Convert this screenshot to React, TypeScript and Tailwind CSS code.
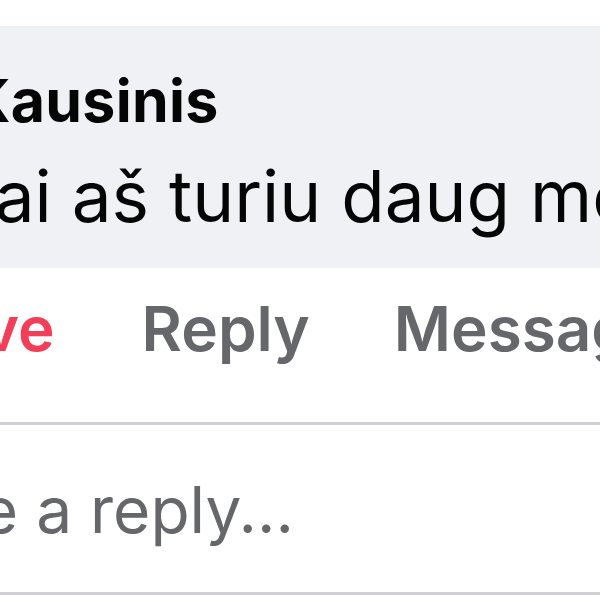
export default function App() {
  const font = { fontFamily: 'Inter, "Noto Sans", sans-serif' };
  return (
    <div className="w-[600px] h-[600px] overflow-hidden bg-white" style={font}>
      <div className="mt-[26px] h-[242px] w-[700px] bg-[#f0f1f5] pt-[40px] overflow-hidden">
        <div className="ml-[-32px] h-[70px] whitespace-nowrap text-[59px] font-bold leading-[70px] tracking-[0.3px] text-[#050505]">
          Kausinis
        </div>
        <div className="ml-[-53px] mt-[10px] h-[100px] whitespace-nowrap text-[71px] leading-[100px] text-[#050505]">
          Kai aš turiu daug metų
        </div>
      </div>
      <div className="mt-[21px] flex h-[80px] items-center whitespace-nowrap text-[62px] font-semibold leading-[80px] text-[#65676b]">
        <span className="ml-[-89px] text-[#f33e58]">Love</span>
        <span className="ml-[87px]">Reply</span>
        <span className="ml-[84px]">Message</span>
      </div>
      <div className="mt-[53px] h-[3px] bg-[#ced0d4]" />
      <div className="mt-[45px] h-[80px] whitespace-nowrap text-[64px] leading-[80px] text-[#65676b]">
        <span className="ml-[-141px] inline-block">Write a reply...</span>
      </div>
      <div className="mt-[42px] h-[3px] bg-[#ced0d4]" />
    </div>
  );
}
